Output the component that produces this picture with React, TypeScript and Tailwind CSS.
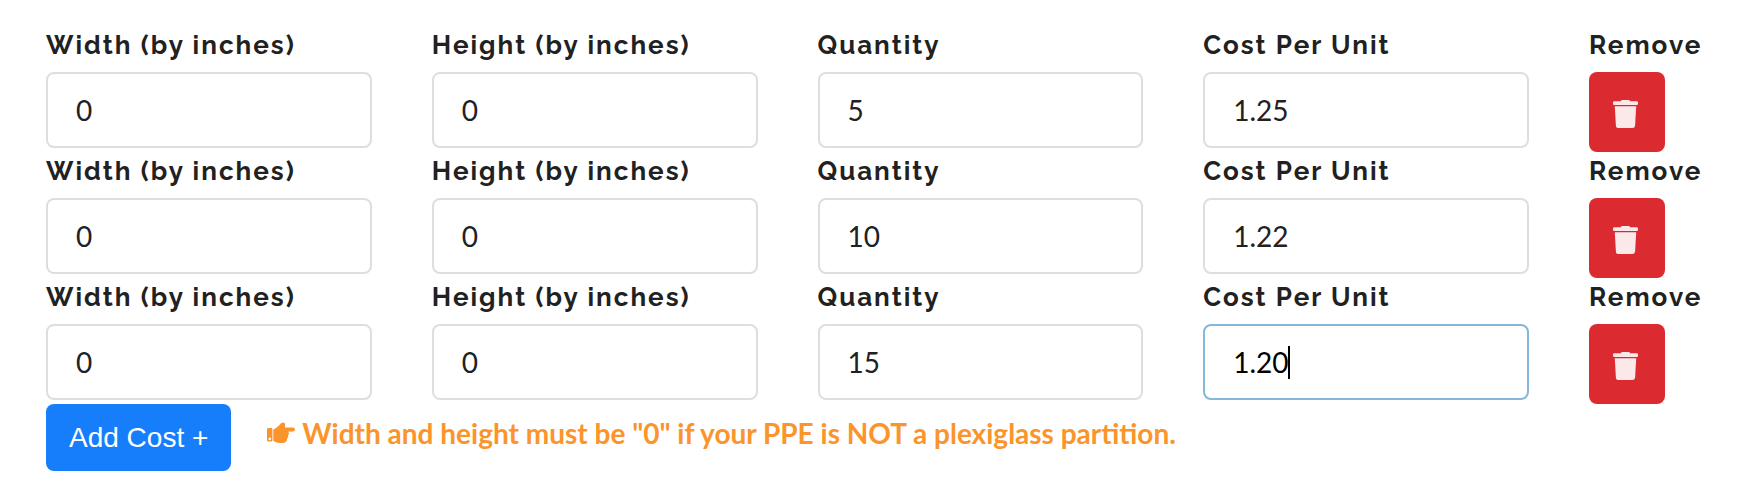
import { useState } from "react";

type Field = "width" | "height" | "quantity" | "cost";
type Row = { id: number } & Record<Field, string>;

const fields: { key: Field; label: string }[] = [
  { key: "width", label: "Width (by inches)" },
  { key: "height", label: "Height (by inches)" },
  { key: "quantity", label: "Quantity" },
  { key: "cost", label: "Cost Per Unit" },
];

const initialRows: Row[] = [
  { id: 1, width: "0", height: "0", quantity: "5", cost: "1.25" },
  { id: 2, width: "0", height: "0", quantity: "10", cost: "1.22" },
  { id: 3, width: "0", height: "0", quantity: "15", cost: "1.20" },
];

const labelClass =
  "mb-2 block whitespace-nowrap font-['Raleway','Lato',sans-serif] text-[26px] leading-[38px] font-bold tracking-[2px] text-[#212121]";

function TrashIcon() {
  return (
    <svg viewBox="0 0 25 28" className="h-7 w-[25px]" fill="currentColor" aria-hidden="true">
      <path d="M8 1.2Q8 0 9.2 0h6.6Q17 0 17 1.2h6.4Q25 1.2 25 2.6v1.2Q25 5 23.8 5H1.2Q0 5 0 3.8V2.6Q0 1.2 1.6 1.2Z" />
      <path d="M1.8 6.2h21.4l-1.1 19.2Q21.9 28 19.4 28H5.6Q3.1 28 2.9 25.4Z" />
    </svg>
  );
}

function HandIcon() {
  return (
    <svg viewBox="0 0 28 22" className="h-[22px] w-7 shrink-0" fill="currentColor" aria-hidden="true">
      <path
        fillRule="evenodd"
        d="M1.2 6h3A1.2 1.2 0 0 1 5.4 7.2V18.3A1.2 1.2 0 0 1 4.2 19.5H1.2A1.2 1.2 0 0 1 0 18.3V7.2A1.2 1.2 0 0 1 1.2 6ZM2.8 15.6a1.3 1.3 0 1 0 0 2.6a1.3 1.3 0 1 0 0-2.6Z"
      />
      <path d="M6.3 7.4C9 6.3 11.5 4.2 13.6 1.7C14.7.3 16.3 0 17.4 1C18.5 2 18.4 3.6 17.7 5.4H25.8Q28 5.5 28 7.5Q28 9.5 25.8 9.6H21.4Q22.6 11.8 21 13.3Q21.7 15.6 20 16.9Q20.2 19 18.6 20Q17.5 21 15 21H12.5C9.8 21 8.5 19.6 6.3 19Z" />
    </svg>
  );
}

export default function App() {
  const [rows, setRows] = useState<Row[]>(initialRows);
  const [active, setActive] = useState<number | null>(3);

  const update = (id: number, key: Field, value: string) => {
    setActive(null);
    setRows(rows.map((r) => (r.id === id ? { ...r, [key]: value } : r)));
  };

  const addRow = () =>
    setRows([...rows, { id: Date.now(), width: "0", height: "0", quantity: "0", cost: "0" }]);

  return (
    <main className="bg-white px-[46px] py-[26px] font-['Lato',sans-serif]">
      {rows.map((row) => (
        <div key={row.id} className="grid grid-cols-[repeat(4,minmax(0,1fr))_123px] gap-x-[60px]">
          {fields.map(({ key, label }) => {
            const isActive = key === "cost" && row.id === active;
            const id = `${key}-${row.id}`;
            return (
              <div key={key}>
                <label htmlFor={id} className={labelClass}>
                  {label}
                </label>
                <div className="relative">
                  <input
                    id={id}
                    type="text"
                    value={row[key]}
                    onFocus={() => setActive(null)}
                    onChange={(e) => update(row.id, key, e.target.value)}
                    className={`block h-[76px] w-full rounded-lg border-2 bg-white px-7 text-[28px] outline-none focus:border-[#85b7d9] ${
                      isActive ? "border-[#85b7d9] text-black" : "border-[#dededf] text-[#212121]"
                    }`}
                  />
                  {isActive && <span className="absolute top-[22px] left-[85px] h-[33px] w-0.5 bg-black" />}
                </div>
              </div>
            );
          })}
          <div>
            <label htmlFor={`remove-${row.id}`} className={labelClass}>
              Remove
            </label>
            <button
              id={`remove-${row.id}`}
              type="button"
              onClick={() => setRows(rows.filter((r) => r.id !== row.id))}
              className="flex h-20 w-[76px] items-center justify-center rounded-lg bg-[#db2a30] pt-1 pr-1 text-[#fbe9ea]"
            >
              <TrashIcon />
            </button>
          </div>
        </div>
      ))}
      <div className="flex items-start gap-9">
        <button
          type="button"
          onClick={addRow}
          className="h-[67px] shrink-0 rounded-lg bg-[#167efb] px-[23px] font-['Liberation_Sans',sans-serif] text-[28px] text-white"
        >
          Add Cost +
        </button>
        <p className="flex items-center gap-[7px] pt-[9px] text-[28px] leading-10 font-bold text-[#fb942b]">
          <HandIcon />
          Width and height must be "0" if your PPE is NOT a plexiglass partition.
        </p>
      </div>
    </main>
  );
}
